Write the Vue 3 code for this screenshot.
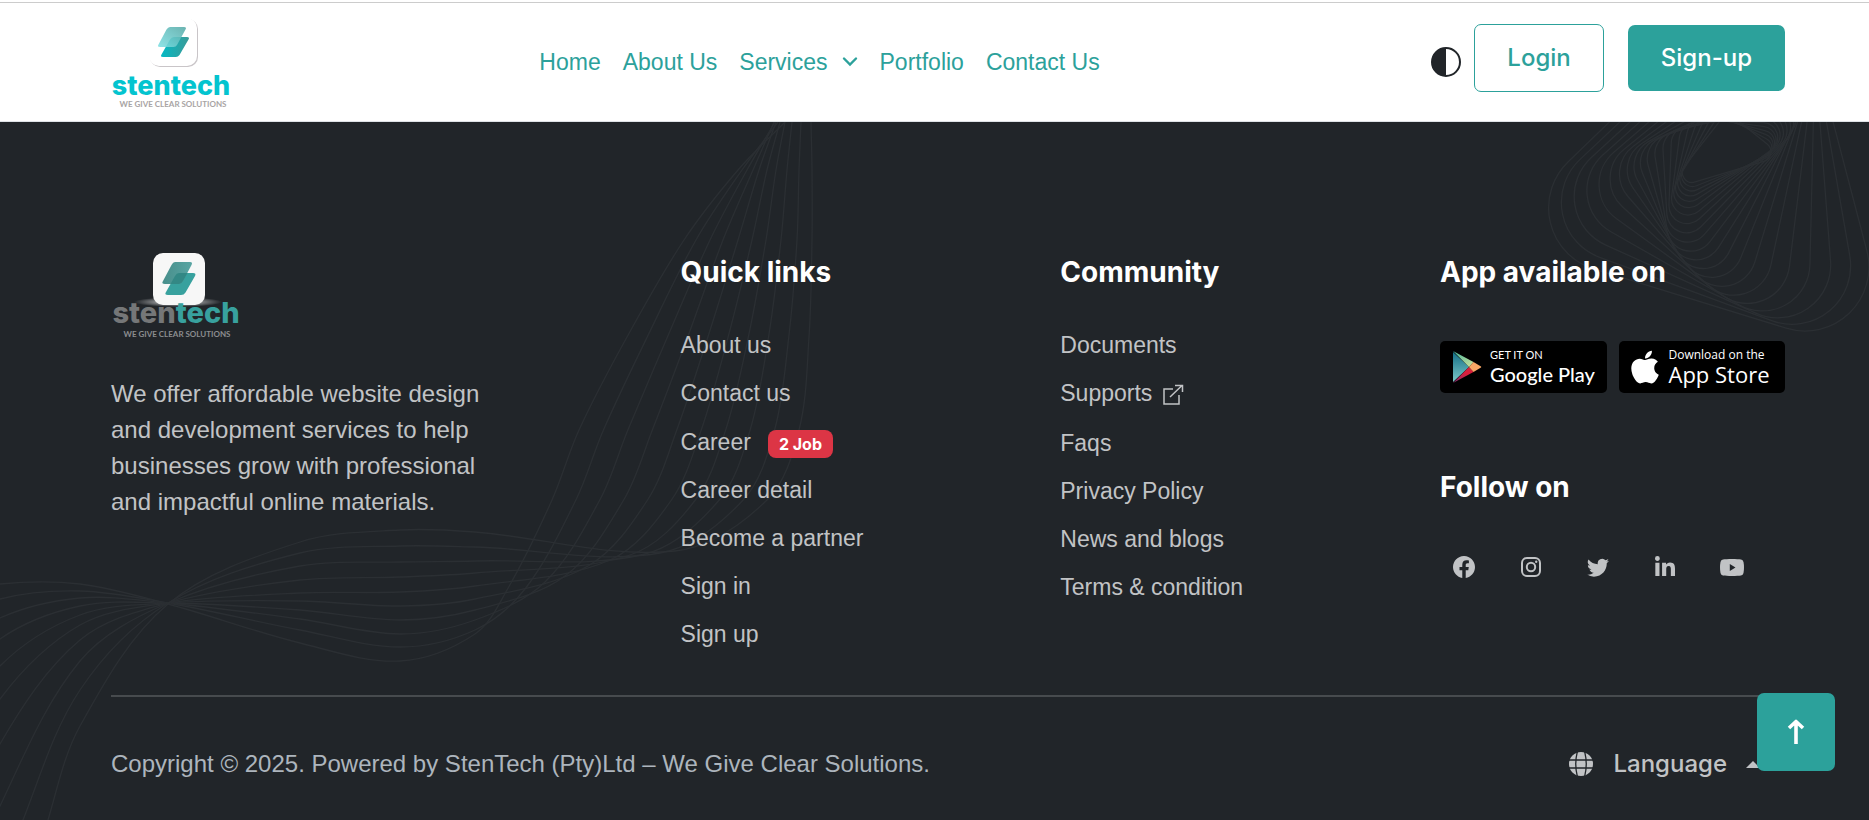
<script setup>
const navLinks = [
  { label: 'Home' },
  { label: 'About Us' },
  { label: 'Services', menu: true },
  { label: 'Portfolio' },
  { label: 'Contact Us' },
]

const quickLinks = [
  { label: 'About us' },
  { label: 'Contact us' },
  { label: 'Career', badge: '2 Job' },
  { label: 'Career detail' },
  { label: 'Become a partner' },
  { label: 'Sign in' },
  { label: 'Sign up' },
]

const communityLinks = [
  { label: 'Documents' },
  { label: 'Supports', external: true },
  { label: 'Faqs' },
  { label: 'Privacy Policy' },
  { label: 'News and blogs' },
  { label: 'Terms & condition' },
]

// Ribbon of ten strands: every station lists where each strand passes.
const spread = (a, b) => Array.from({ length: 10 }, (_, i) => a + ((b - a) * i) / 9)
const atX = (x, ys) => ys.map((y) => [x, y])
const atY = (y, xs) => xs.map((x) => [x, y])
const stations = [
  [[-40, 596], [-40, 622], [-40, 652], [-40, 690], [-40, 735], [-40, 785], [-30, 830], [-20, 870], [5, 880], [34, 880]],
  [[0, 584], [0, 599], [0, 618], [0, 639], [0, 666], [0, 699], [0, 744], [0, 806], [23, 820], [48, 820]],
  atX(80, [584, 591, 598, 606, 615, 625, 640, 661, 690, 726]),
  atX(168, [604, 603, 603, 603, 603, 603, 603, 603, 603, 604]),
  atX(300, [643, 630, 619, 610, 601, 593, 580, 566, 553, 542]),
  atX(400, [661, 647, 634, 620, 606, 592, 577, 562, 546, 530]),
  atX(475, [634, 630, 620, 610, 599, 586, 573, 561, 547, 532]),
  [[507, 590], [525, 589], [545, 582], [565, 576], [588, 566], [610, 560], [630, 555], [645, 554], [660, 553], [675, 551]],
  atY(500, spread(552, 767)),
  atY(430, spread(579, 799)),
  atY(337, spread(627, 809)),
  atY(240, [684, 696, 710, 723, 738, 752, 766, 781, 797, 812]),
  atY(170, [738, 742, 747, 753, 759, 767, 776, 787, 799, 812]),
  atY(122, [785, 778, 775, 774, 776, 780, 785, 792, 801, 811]),
]

function smooth(points) {
  let d = `M${points[0][0]} ${points[0][1]}`
  for (let i = 0; i < points.length - 1; i++) {
    const p0 = points[i - 1] || points[i]
    const p1 = points[i]
    const p2 = points[i + 1]
    const p3 = points[i + 2] || p2
    const len = Math.hypot(p2[0] - p1[0], p2[1] - p1[1])
    const tangent = (a, b) => {
      const l = Math.hypot(b[0] - a[0], b[1] - a[1]) || 1
      return [((b[0] - a[0]) / l) * (len / 3), ((b[1] - a[1]) / l) * (len / 3)]
    }
    const t1 = tangent(p0, p2)
    const t2 = tangent(p1, p3)
    d += `C${p1[0] + t1[0]} ${p1[1] + t1[1]} ${p2[0] - t2[0]} ${p2[1] - t2[1]} ${p2[0]} ${p2[1]}`
  }
  return d
}
const strands = Array.from({ length: 10 }, (_, i) => smooth(stations.map((s) => s[i])))

// Rounded triangles that shrink and turn towards the centre.
// Each key shape: left x, y, bottom x, y, right x, y, corner radius.
const keys = [
  [1490, 237, 1896, 362, 1788, -50, 64],
  [1590, 177, 1757, 330, 1832, -20, 38],
  [1642, 144, 1681, 280, 1838, 72, 24],
  [1690, 120, 1665, 229, 1806, 124, 15],
  [1727, 112, 1665, 191, 1782, 156, 10],
]
function between(t) {
  const i = Math.min(3, Math.floor(t))
  const u = t - i
  return keys[0].map((_, k) => {
    const b = keys[i][k]
    const c = keys[i + 1][k]
    const a = i > 0 ? keys[i - 1][k] : 2 * b - c
    const d = i < 3 ? keys[i + 2][k] : 2 * c - b
    return b + 0.5 * u * (c - a + u * (2 * a - 5 * b + 4 * c - d + u * (3 * (b - c) + d - a)))
  })
}

function roundedTriangle(v, r) {
  let d = ''
  v.forEach((p, i) => {
    const prev = v[(i + 2) % 3]
    const next = v[(i + 1) % 3]
    const unit = (q) => {
      const l = Math.hypot(q[0] - p[0], q[1] - p[1])
      return [(q[0] - p[0]) / l, (q[1] - p[1]) / l]
    }
    const a = unit(prev)
    const b = unit(next)
    const angle = Math.acos(a[0] * b[0] + a[1] * b[1])
    const dist = r / Math.tan(angle / 2)
    d += `${i ? 'L' : 'M'}${p[0] + a[0] * dist} ${p[1] + a[1] * dist}`
    d += `A${r} ${r} 0 0 0 ${p[0] + b[0] * dist} ${p[1] + b[1] * dist}`
  })
  return d + 'Z'
}
const rings = Array.from({ length: 21 }, (_, i) => {
  const k = between(i / 5)
  return roundedTriangle([[k[0], k[1]], [k[2], k[3]], [k[4], k[5]]], k[6])
})
</script>

<template>
  <header class="header">
    <a class="brand" href="#" aria-label="StenTech home">
      <svg width="124" height="94" viewBox="0 -2 124 94">
        <defs>
          <linearGradient id="ha" x1="0" y1="1" x2="1" y2="0">
            <stop offset="0" stop-color="#7ee0e4" /><stop offset="1" stop-color="#57a9a6" />
          </linearGradient>
          <linearGradient id="hb" x1="0" y1="0" x2="1" y2="0">
            <stop offset="0" stop-color="#04b9c4" /><stop offset="1" stop-color="#3b9b98" />
          </linearGradient>
        </defs>
        <rect x="39" y="2" width="48" height="48" rx="10" fill="#c9c5c8" />
        <rect x="38" y="1" width="48" height="48" rx="10" fill="#fff" />
        <path d="M63 20H76Q79 20 77.500 22.500L68.500 38Q67 40 65 40H52Q49 40 50.500 37.500L59 22.500Q60.500 20 63 20Z" fill="url(#hb)" />
        <path d="M59 10H73Q76 10 74.500 12.500L66 28Q65 30 62.500 30H49Q46 30 47.500 27.500L55.500 12.500Q57 10 59 10Z" fill="url(#ha)" opacity="0.88" />
        <text class="word" x="60" y="78" text-anchor="middle" fill="#04c4cf">stentech</text>
        <text class="tag" x="62" y="90" text-anchor="middle" fill="#a8a4a4">WE GIVE CLEAR SOLUTIONS</text>
      </svg>
    </a>

    <nav class="nav" aria-label="Main">
      <a v-for="l in navLinks" :key="l.label" href="#">
        {{ l.label }}
        <svg v-if="l.menu" class="chevron" width="16" height="12" viewBox="0 0 16 12">
          <path d="M2 2.500L8 8.500L14 2.500" fill="none" stroke="currentColor" stroke-width="2.400" stroke-linecap="round" />
        </svg>
      </a>
    </nav>

    <div class="actions">
      <button class="theme" type="button" aria-label="Toggle theme">
        <svg width="30" height="30" viewBox="0 0 30 30">
          <circle cx="15" cy="15" r="14" fill="none" stroke="#212529" stroke-width="2" />
          <path d="M15 1A14 14 0 0 0 15 29Z" fill="#212529" />
        </svg>
      </button>
      <div class="buttons">
        <button class="btn outline" type="button">Login</button>
        <button class="btn solid" type="button">Sign-up</button>
      </div>
    </div>
  </header>

  <footer class="footer">
    <svg class="lines" width="1869" height="698" viewBox="0 122 1869 698" aria-hidden="true">
      <path v-for="(d, i) in strands" :key="'s' + i" :d="d" />
      <path v-for="(d, i) in rings" :key="'r' + i" :d="d" />
    </svg>

    <div class="inner">
      <div class="grid">
        <section class="about">
          <svg class="footlogo" width="132" height="92" viewBox="0 0 132 92" role="img" aria-label="StenTech">
            <defs>
              <radialGradient id="glow">
                <stop offset="0" stop-color="#fff" stop-opacity="0.9" /><stop offset="1" stop-color="#fff" stop-opacity="0" />
              </radialGradient>
              <linearGradient id="fa" x1="0" y1="0" x2="1" y2="0">
                <stop offset="0" stop-color="#478e8b" /><stop offset="1" stop-color="#59a5a3" />
              </linearGradient>
            </defs>
            <ellipse cx="67" cy="52" rx="44" ry="5" fill="url(#glow)" />
            <rect x="42" y="3" width="52" height="52" rx="10" fill="#f7f7f7" />
            <path d="M68 23H82Q85.500 23 84 26L74.500 42.500Q73 45 70 45H57Q53 45 55 42L64 26Q65.500 23 68 23Z" fill="#38a19e" />
            <path d="M64 12H79Q82 12 80.500 15L72 31Q70.500 34 68 34H54Q50 34 52 31L60.500 15Q62 12 64 12Z" fill="url(#fa)" />
            <path d="M68 23H76.500L72 31Q70.500 34 68 34H59.500L64 26Q65.500 23 68 23Z" fill="#338885" />
            <text class="word big" x="65" y="73" text-anchor="middle" fill="#757778">sten<tspan fill="#38a19e">tech</tspan></text>
            <text class="tag" x="66" y="87" text-anchor="middle" fill="#8b8d8f">WE GIVE CLEAR SOLUTIONS</text>
          </svg>
          <p>We offer affordable website design and development services to help businesses grow with professional and impactful online materials.</p>
        </section>

        <section class="col">
          <h2>Quick links</h2>
          <ul>
            <li v-for="l in quickLinks" :key="l.label" :class="{ tagged: l.badge }">
              <a href="#">{{ l.label }}</a>
              <span v-if="l.badge" class="badge">{{ l.badge }}</span>
            </li>
          </ul>
        </section>

        <section class="col">
          <h2>Community</h2>
          <ul>
            <li v-for="l in communityLinks" :key="l.label" :class="{ outside: l.external }">
              <a href="#">{{ l.label }}
                <svg v-if="l.external" class="external" width="22" height="22" viewBox="0 0 22 22">
                  <path d="M11 5H2V20H17V11M8 13L20 1.500M13 1.500H20.500V8" fill="none" stroke="currentColor" stroke-width="1.500" />
                </svg>
              </a>
            </li>
          </ul>
        </section>

        <section class="col">
          <h2>App available on</h2>
          <div class="stores">
            <a class="store" href="#">
              <svg width="30" height="34" viewBox="0 0 30 34">
                <defs>
                  <linearGradient id="pl" x1="0" y1="0" x2="0" y2="1">
                    <stop offset="0" stop-color="#136f86" /><stop offset="1" stop-color="#7cc8c8" />
                  </linearGradient>
                  <linearGradient id="pr" x1="0" y1="1" x2="1" y2="0">
                    <stop offset="0" stop-color="#7b2f73" /><stop offset="0.600" stop-color="#d81f3c" />
                  </linearGradient>
                  <linearGradient id="pg" x1="0" y1="0" x2="1" y2="1">
                    <stop offset="0" stop-color="#41b39c" /><stop offset="1" stop-color="#cfe39a" />
                  </linearGradient>
                </defs>
                <path d="M1 2V32L17 17Z" fill="url(#pl)" />
                <path d="M1 1L21.500 12L17 17Z" fill="url(#pg)" />
                <path d="M1 33L21.500 22L17 17Z" fill="url(#pr)" />
                <path d="M21.500 12L29 16.500Q29.500 17 29 17.500L21.500 22L17 17Z" fill="#f9a765" />
              </svg>
              <span class="play"><small>GET IT ON</small><b>Google Play</b></span>
            </a>
            <a class="store" href="#">
              <svg width="28" height="34" viewBox="0 22 384 466">
                <path fill="#fff" d="M318.7 268.7c-.2-36.7 16.4-64.4 50-84.8-18.8-26.9-47.2-41.7-84.7-44.6-35.5-2.8-74.3 20.7-88.5 20.7-15 0-49.4-19.7-76.4-19.7C63.3 141.2 4 184.8 4 273.5q0 39.3 14.4 81.200c12.8 36.7 59 126.7 107.2 125.2 25.2-.6 43-17.9 75.8-17.9 31.8 0 48.3 17.9 76.4 17.9 48.6-.7 90.4-82.5 102.6-119.3-65.2-30.7-61.7-90-61.7-91.9zm-56.6-164.2c27.3-32.4 24.8-61.9 24-72.5-24.1 1.4-52 16.4-67.9 34.9-17.5 19.8-27.8 44.3-25.6 71.9 26.1 2 49.9-11.4 69.5-34.3z" />
              </svg>
              <span class="apple"><small>Download on the</small><b>App Store</b></span>
            </a>
          </div>
          <h2 class="follow">Follow on</h2>
          <div class="social">
            <a href="#" aria-label="Facebook">
              <svg width="22" height="22" viewBox="0 0 16 16"><path fill="currentColor" d="M16 8.049c0-4.446-3.582-8.05-8-8.05C3.58 0-.002 3.603-.002 8.05c0 4.017 2.926 7.347 6.75 7.951v-5.625h-2.03V8.05H6.75V6.275c0-2.017 1.195-3.131 3.022-3.131.876 0 1.791.157 1.791.157v1.98h-1.009c-.993 0-1.303.621-1.303 1.258v1.51h2.218l-.354 2.326H9.25V16c3.824-.604 6.75-3.934 6.75-7.951z" /></svg>
            </a>
            <a href="#" aria-label="Instagram">
              <svg width="20" height="20" viewBox="0 0 20 20" fill="none" stroke="currentColor" stroke-width="2">
                <rect x="1" y="1" width="18" height="18" rx="5" /><circle cx="10" cy="10" r="4.200" /><circle cx="15.200" cy="4.800" r="1.200" fill="currentColor" stroke="none" />
              </svg>
            </a>
            <a href="#" aria-label="Twitter">
              <svg width="22" height="22" viewBox="0 0 16 16"><path fill="currentColor" d="M5.026 15c6.038 0 9.341-5.003 9.341-9.334q.002-.211-.006-.422A6.7 6.7 0 0 0 16 3.542a6.7 6.7 0 0 1-1.889.518 3.3 3.3 0 0 0 1.447-1.817 6.5 6.5 0 0 1-2.087.793A3.286 3.286 0 0 0 7.875 6.03a9.32 9.32 0 0 1-6.767-3.429 3.29 3.29 0 0 0 1.018 4.382A3.3 3.3 0 0 1 .64 6.575v.045a3.29 3.29 0 0 0 2.632 3.218 3.2 3.2 0 0 1-.865.115 3 3 0 0 1-.614-.057 3.28 3.28 0 0 0 3.067 2.277A6.6 6.6 0 0 1 .78 13.58a6 6 0 0 1-.78-.045A9.34 9.34 0 0 0 5.026 15" /></svg>
            </a>
            <a href="#" aria-label="LinkedIn">
              <svg width="20" height="23" viewBox="0 0 448 512"><path fill="currentColor" d="M100.28 448H7.4V148.9h92.88zM53.79 108.1C24.09 108.1 0 83.5 0 53.8a53.79 53.79 0 0 1 107.58 0c0 29.700-24.1 54.3-53.79 54.3zM447.9 448h-92.68V302.4c0-34.7-.7-79.2-48.29-79.2-48.29 0-55.69 37.7-55.69 76.7V448h-92.78V148.9h89.08v40.8h1.3c12.4-23.5 42.69-48.3 87.88-48.3 94 0 111.28 61.9 111.28 142.3V448z" /></svg>
            </a>
            <a href="#" aria-label="YouTube">
              <svg width="24" height="17" viewBox="0 0 24 17"><path fill="currentColor" fill-rule="evenodd" d="M12 0C16 0 19 .2 21 .5Q23 .8 23.500 3Q24 5.500 24 8.500T23.500 14Q23 16.200 21 16.500C19 16.800 16 17 12 17S5 16.800 3 16.500Q1 16.200 .5 14Q0 11.500 0 8.500T.5 3Q1 .8 3 .5C5 .2 8 0 12 0ZM9.800 5V12L15.500 8.500Z" /></svg>
            </a>
          </div>
        </section>
      </div>

      <div class="bottom">
        <p>Copyright © 2025. Powered by StenTech (Pty)Ltd – We Give Clear Solutions.</p>
        <button class="language" type="button">
          <svg width="24" height="24" viewBox="0 0 24 24">
            <circle cx="12" cy="12" r="12" fill="#c1c3c5" />
            <path d="M0 8H24M0 16H24M8.500 -1Q5 12 8.500 25M15.500 -1Q19 12 15.500 25" fill="none" stroke="#212529" stroke-width="1.300" />
          </svg>
          <span>Language</span>
          <i class="caret"></i>
        </button>
      </div>
    </div>
  </footer>

  <button class="totop" type="button" aria-label="Back to top">
    <svg width="18" height="26" viewBox="0 0 18 26">
      <path d="M9 25V3M2 9L9 2.500L16 9" fill="none" stroke="#fff" stroke-width="3.600" stroke-linejoin="round" />
    </svg>
  </button>
</template>

<style>
body {
  margin: 0;
  background: #212529;
}
</style>

<style scoped>
* {
  box-sizing: border-box;
}
a {
  color: inherit;
  text-decoration: none;
}
button {
  margin: 0;
  padding: 0;
  border: 0;
  background: none;
  font: inherit;
  color: inherit;
  cursor: pointer;
}
svg {
  display: block;
  flex: none;
}
.header {
  position: relative;
  display: flex;
  align-items: center;
  height: 122px;
  padding: 2px 84px 0 111px;
  background: #fff;
  box-shadow: inset 0 -1px #dee2e6;
  font-family: "Liberation Sans", Arial, sans-serif;
}
.header::before {
  content: "";
  position: absolute;
  left: 0;
  right: 0;
  top: 2px;
  height: 1px;
  background: #ccc;
}
.brand {
  flex: 5 1 0;
}
.word {
  font: 800 27px Inter, sans-serif;
}
.word.big {
  font-size: 29px;
}
.tag {
  font: 700 8px Lato, sans-serif;
}
.nav {
  display: flex;
  gap: 22px;
  color: #2ca19b;
  font-size: 23px;
  line-height: 36px;
}
.nav a {
  display: flex;
  align-items: center;
}
.chevron {
  margin-left: 14px;
}
.actions {
  flex: 8 1 0;
  display: flex;
  align-items: center;
  justify-content: flex-end;
  gap: 13px;
}
.buttons {
  display: flex;
  align-items: center;
  gap: 24px;
  padding-bottom: 8px;
}
.btn {
  padding: 15px 33px;
  border-radius: 7px;
  font: 500 24px/36px Inter, sans-serif;
}
.outline {
  padding: 15px 32px;
  border: 1px solid #2ca19b;
  color: #2ca19b;
}
.solid {
  background: #2ca19b;
  color: #fff;
}
.footer {
  position: relative;
  overflow: hidden;
  background: #212529;
  color: #c1c3c5;
  font: 24px/36px "Liberation Sans", Arial, sans-serif;
}
.lines {
  position: absolute;
  top: 0;
  right: 0;
  fill: none;
  stroke: #2b2f33;
  stroke-width: 1.300;
}
.inner {
  position: relative;
  padding: 128px 84px 0 111px;
}
.grid {
  display: grid;
  grid-template-columns: 3fr 2fr 2fr 345px;
  padding-bottom: 31px;
}
p {
  margin: 0;
}
.about p {
  max-width: 380px;
  margin-top: 34px;
}
h2 {
  margin: 0;
  color: #fff;
  font: 700 28px/34px Inter, sans-serif;
}
.col {
  padding-top: 5px;
}
ul {
  margin: 38px 0 0;
  padding: 0;
  list-style: none;
  font-size: 23px;
}
li {
  display: flex;
  align-items: baseline;
  min-height: 48px;
}
li a {
  display: flex;
}
li.tagged {
  min-height: 49px;
  padding-top: 1px;
}
li.outside {
  min-height: 50px;
}
.badge {
  margin-left: 17px;
  padding: 5px 11px;
  border-radius: 8px;
  background: #dc3545;
  color: #fff;
  font: 700 16px/18px Inter, sans-serif;
}
.external {
  margin: 9px 0 0 10px;
}
.stores {
  display: flex;
  gap: 12px;
  margin-top: 52px;
}
.store {
  flex: 1;
  display: flex;
  align-items: center;
  gap: 8px;
  height: 52px;
  padding-left: 12px;
  border-radius: 5px;
  background: #000;
  color: #fff;
  white-space: nowrap;
}
.store span {
  display: flex;
  flex-direction: column;
}
.store small {
  font-size: 12px;
  line-height: 14px;
}
.store b {
  font-size: 22px;
  line-height: 24px;
  font-weight: 500;
}
.play {
  font-family: Lato, sans-serif;
}
.play small {
  font-size: 11px;
}
.play b {
  font-size: 20px;
}
.apple {
  padding-left: 2px;
  font-family: "Open Sans", sans-serif;
}
.follow {
  margin-top: 77px;
}
.social {
  display: flex;
  gap: 19px;
  margin-top: 39px;
}
.social a {
  display: flex;
  align-items: center;
  justify-content: center;
  width: 48px;
  height: 48px;
}
.bottom {
  display: flex;
  justify-content: space-between;
  align-items: center;
  padding: 49px 0 38px;
  border-top: 2px solid #474b4e;
  color: #adb5bd;
}
.language {
  display: flex;
  align-items: center;
  gap: 20px;
  padding-right: 25px;
  color: #c1c3c5;
  font: 500 24px/36px Inter, sans-serif;
}
.caret {
  margin-left: -1px;
  border: 7px solid transparent;
  border-top: 0;
  border-bottom-color: #c1c3c5;
}
.totop {
  position: fixed;
  right: 34px;
  bottom: 49px;
  display: flex;
  align-items: center;
  justify-content: center;
  width: 78px;
  height: 78px;
  border-radius: 7px;
  background: #2ca19b;
}
</style>
